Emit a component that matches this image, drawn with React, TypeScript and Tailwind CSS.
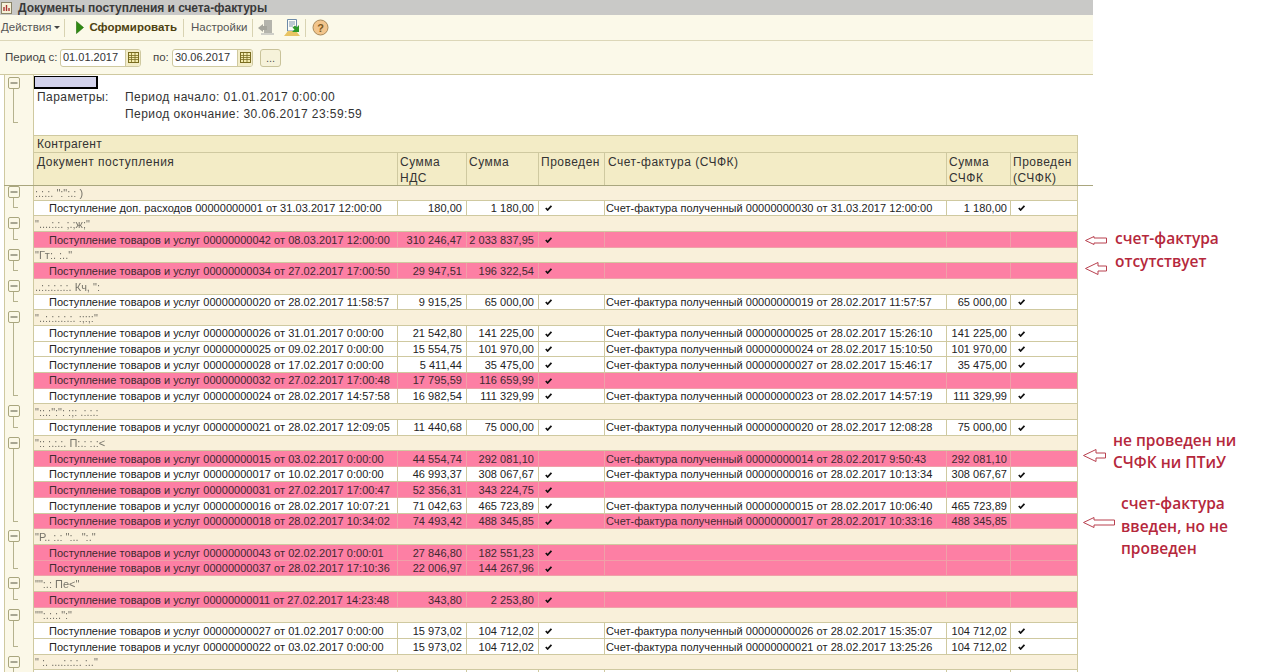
const COLS = 'grid grid-cols-[364px_69px_72px_66px_342px_64px_67px] w-[1044px] shrink-0';

type Row = {
  doc: string;
  nds: string;
  sum: string;
  posted?: boolean;
  sf?: string;
  sfSum?: string;
  sfPosted?: boolean;
  pink?: boolean;
};

type Group = { name: string; rows: Row[] };

const goods = (no: string, date: string) => `Поступление товаров и услуг 000000000${no} от ${date}`;
const invoice = (no: string, date: string) => `Счет-фактура полученный 000000000${no} от ${date}`;

const groups: Group[] = [
  { name: ':.:.:. ":":.: )', rows: [
    { doc: 'Поступление доп. расходов 00000000001 от 31.03.2017 12:00:00', nds: '180,00', sum: '1 180,00', posted: true, sf: invoice('30', '31.03.2017 12:00:00'), sfSum: '1 180,00', sfPosted: true },
  ] },
  { name: '"....:.:. ;.;ж;"', rows: [
    { doc: goods('42', '08.03.2017 12:00:00'), nds: '310 246,47', sum: '2 033 837,95', posted: true, pink: true },
  ] },
  { name: '"Гт:. :.."', rows: [
    { doc: goods('34', '27.02.2017 17:00:50'), nds: '29 947,51', sum: '196 322,54', posted: true, pink: true },
  ] },
  { name: '..:.:.:.:.:. Кч, ":', rows: [
    { doc: goods('20', '28.02.2017 11:58:57'), nds: '9 915,25', sum: '65 000,00', posted: true, sf: invoice('19', '28.02.2017 11:57:57'), sfSum: '65 000,00', sfPosted: true },
  ] },
  { name: '"..:.:.:.:.:. :;:;:"', rows: [
    { doc: goods('26', '31.01.2017 0:00:00'), nds: '21 542,80', sum: '141 225,00', posted: true, sf: invoice('25', '28.02.2017 15:26:10'), sfSum: '141 225,00', sfPosted: true },
    { doc: goods('25', '09.02.2017 0:00:00'), nds: '15 554,75', sum: '101 970,00', posted: true, sf: invoice('24', '28.02.2017 15:10:50'), sfSum: '101 970,00', sfPosted: true },
    { doc: goods('28', '17.02.2017 0:00:00'), nds: '5 411,44', sum: '35 475,00', posted: true, sf: invoice('27', '28.02.2017 15:46:17'), sfSum: '35 475,00', sfPosted: true },
    { doc: goods('32', '27.02.2017 17:00:48'), nds: '17 795,59', sum: '116 659,99', posted: true, pink: true },
    { doc: goods('24', '28.02.2017 14:57:58'), nds: '16 982,54', sum: '111 329,99', posted: true, sf: invoice('23', '28.02.2017 14:57:19'), sfSum: '111 329,99', sfPosted: true },
  ] },
  { name: '"::.:":": :;: .:.:.:', rows: [
    { doc: goods('21', '28.02.2017 12:09:05'), nds: '11 440,68', sum: '75 000,00', posted: true, sf: invoice('20', '28.02.2017 12:08:28'), sfSum: '75 000,00', sfPosted: true },
  ] },
  { name: '":: :.:.:. П:.: :.:<', rows: [
    { doc: goods('15', '03.02.2017 0:00:00'), nds: '44 554,74', sum: '292 081,10', pink: true, sf: invoice('14', '28.02.2017 9:50:43'), sfSum: '292 081,10' },
    { doc: goods('17', '10.02.2017 0:00:00'), nds: '46 993,37', sum: '308 067,67', posted: true, sf: invoice('16', '28.02.2017 10:13:34'), sfSum: '308 067,67', sfPosted: true },
    { doc: goods('31', '27.02.2017 17:00:47'), nds: '52 356,31', sum: '343 224,75', posted: true, pink: true },
    { doc: goods('16', '28.02.2017 10:07:21'), nds: '71 042,63', sum: '465 723,89', posted: true, sf: invoice('15', '28.02.2017 10:06:40'), sfSum: '465 723,89', sfPosted: true },
    { doc: goods('18', '28.02.2017 10:34:02'), nds: '74 493,42', sum: '488 345,85', posted: true, pink: true, sf: invoice('17', '28.02.2017 10:33:16'), sfSum: '488 345,85' },
  ] },
  { name: '"Р.. :.: ":.. ":."', rows: [
    { doc: goods('43', '02.02.2017 0:00:01'), nds: '27 846,80', sum: '182 551,23', posted: true, pink: true },
    { doc: goods('37', '28.02.2017 17:10:36'), nds: '22 006,97', sum: '144 267,96', posted: true, pink: true },
  ] },
  { name: '"":.: Пе<"', rows: [
    { doc: goods('11', '27.02.2017 14:23:48'), nds: '343,80', sum: '2 253,80', posted: true, pink: true },
  ] },
  { name: '"":.:.:.":"', rows: [
    { doc: goods('27', '01.02.2017 0:00:00'), nds: '15 973,02', sum: '104 712,02', posted: true, sf: invoice('26', '28.02.2017 15:35:07'), sfSum: '104 712,02', sfPosted: true },
    { doc: goods('22', '03.02.2017 0:00:00'), nds: '15 973,02', sum: '104 712,02', posted: true, sf: invoice('21', '28.02.2017 13:25:26'), sfSum: '104 712,02', sfPosted: true },
  ] },
  { name: '" :. ....:.:.:. :.."', rows: [{ doc: '', nds: '', sum: '' }] },
];

function Check() {
  return (
    <svg width="7" height="6" viewBox="0 0 7 6" className="block">
      <path d="M0.8 3 L2.6 5 L6.4 0.8" fill="none" stroke="#111" strokeWidth="1.7" />
    </svg>
  );
}

function TreeBox() {
  return (
    <svg width="12" height="12" viewBox="0 0 12 12" className="block">
      <rect x="0.5" y="0.5" width="11" height="11" rx="1.5" fill="#fbf8e6" stroke="#a9a67e" />
      <path d="M2.5 6 H9.5" stroke="#55553f" />
    </svg>
  );
}

function Calendar() {
  return (
    <div className="w-[15px] h-full bg-[#f3edc8] border-l border-[#cfc9a0] flex items-center justify-center">
      <svg width="11" height="11" viewBox="0 0 11 11">
        <rect x="0.5" y="0.5" width="10" height="10" fill="#f4ecae" stroke="#7a6d20" />
        <path d="M0.5 3.5H10.5M0.5 5.5H10.5M0.5 7.5H10.5M3.5 0.5V10.5M7 0.5V10.5" stroke="#7a6d20" strokeWidth="0.8" />
      </svg>
    </div>
  );
}

function DateInput({ value }: { value: string }) {
  return (
    <div className="flex items-center justify-between w-[81px] h-[18px] bg-white border border-[#cfc9a0] rounded-[3px] overflow-hidden">
      <span className="pl-[2px] text-[11px] text-[#333]">{value}</span>
      <Calendar />
    </div>
  );
}

function Sep({ className }: { className: string }) {
  return <div className={`w-px h-[18px] bg-[#d8d3b2] ${className}`} />;
}

function Cell({ children, pink, right, last, tight }: { children?: React.ReactNode; pink?: boolean; right?: boolean; last?: boolean; tight?: boolean }) {
  return (
    <div
      className={`h-full pt-px flex items-center overflow-hidden whitespace-nowrap ${last ? '' : 'border-r'} ${pink ? 'border-[#f0a0a8]' : 'border-[#cfc9a0]'} ${right ? 'justify-end' : ''} ${right && !tight ? 'pr-[4px]' : ''} ${tight ? 'pr-[3px]' : ''}`}
    >
      {children}
    </div>
  );
}

function Gutter({ end, children }: { end?: boolean; children?: React.ReactNode }) {
  return (
    <div className="w-[29px] h-full bg-[#fbf8e8] border-r border-[#cfc9a0] shrink-0">
      {children ?? (
        <div className={`ml-[8px] w-[5px] border-l border-[#b5b28e] ${end ? 'h-1/2 border-b' : 'h-full'}`} />
      )}
    </div>
  );
}

function DataRow({ row, end }: { row: Row; end: boolean }) {
  const bg = row.pink ? 'bg-[#fd7fa4] text-[#3f2a30] border-[#f0a0a8]' : 'bg-white text-[#222] border-[#cfc9a0]';
  return (
    <div className="flex h-[15.67px] pl-[4px]">
      <div className="w-px bg-[#cfc9a0] shrink-0" />
      <Gutter end={end} />
      <div className={`${COLS} ${bg} border-b border-r border-r-[#cfc9a0] text-[11px] tracking-[0.04px]`}>
        <Cell pink={row.pink}><span className="pl-[15px]">{row.doc}</span></Cell>
        <Cell pink={row.pink} right>{row.nds}</Cell>
        <Cell pink={row.pink} right>{row.sum}</Cell>
        <Cell pink={row.pink}><span className="pl-[6px]">{row.posted && <Check />}</span></Cell>
        <Cell pink={row.pink}><span className="pl-[1px]">{row.sf}</span></Cell>
        <Cell pink={row.pink} right tight>{row.sfSum}</Cell>
        <Cell pink={row.pink} last><span className="pl-[7px]">{row.sfPosted && <Check />}</span></Cell>
      </div>
    </div>
  );
}

function GroupRow({ name, open }: { name: string; open: boolean }) {
  return (
    <div className="flex h-[15.67px] pl-[4px]">
      <div className="w-px bg-[#cfc9a0] shrink-0" />
      <Gutter>
        <div className="h-full flex flex-col items-start pl-[3px] pt-[1px]">
          <TreeBox />
          {open && <div className="ml-[5px] flex-1 border-l border-[#b5b28e]" />}
        </div>
      </Gutter>
      <div className="w-[1044px] shrink-0 pt-px bg-[#f9f0da] border-b border-r border-[#cfc9a0] flex items-center pl-[1px] text-[11px] text-[#77746a] blur-[0.4px] whitespace-nowrap overflow-hidden">
        {name}
      </div>
    </div>
  );
}

function HeaderText({ children, wide }: { children: React.ReactNode; wide?: boolean }) {
  return (
    <div className={`border-r border-[#cfc9a0] ${wide ? 'pl-[3px]' : 'pl-[2px]'} pt-[1px] leading-[16px] tracking-[0.5px] overflow-hidden whitespace-nowrap`}>
      {children}
    </div>
  );
}

function Arrow({ w, h, className }: { w: number; h: number; className: string }) {
  const m = h / 2;
  const hw = h;
  return (
    <svg width={w} height={h} viewBox={`0 0 ${w} ${h}`} className={`absolute ${className}`}>
      <path
        d={`M0.5 ${m} L${hw} 0.5 V${m - 2.5} H${w - 0.5} V${m + 2.5} H${hw} V${h - 0.5} Z`}
        fill="white"
        stroke="#b8404f"
        strokeWidth="1"
      />
    </svg>
  );
}

function Note({ className, children }: { className: string; children: React.ReactNode }) {
  return (
    <div className={`absolute whitespace-nowrap text-[15.5px] leading-[20px] font-semibold text-[#b5283c] font-['Open_Sans',sans-serif] ${className}`}>
      {children}
    </div>
  );
}

export default function App() {
  return (
    <div className="relative w-[1264px] h-[672px] overflow-hidden bg-white font-['Liberation_Sans',Arial,sans-serif] text-[#222]">
      <div className="w-[1093px]">
        {/* Title */}
        <div className="h-[15px] bg-[#c9c9c7] flex items-center overflow-hidden">
          <svg width="12" height="13" viewBox="0 0 12 13" className="ml-[1px]">
            <rect x="0.5" y="1.5" width="10" height="11" fill="#f6f1d8" stroke="#8a8468" />
            <path d="M3 10V6M5.5 10V4M8 10V7" stroke="#a33" strokeWidth="1.4" />
          </svg>
          <span className="ml-[5px] text-[12px] font-bold text-[#3a3a3a] tracking-[-0.07px]">Документы поступления и счета-фактуры</span>
        </div>

        {/* Toolbar */}
        <div className="h-[26px] bg-[#fbf9e9] border-b border-[#dcd7b8] flex items-center text-[11.5px] text-[#555]">
          <span className="ml-[1px]">Действия</span>
          <span className="ml-[3px] w-0 h-0 border-x-[3px] border-x-transparent border-t-[3px] border-t-[#444]" />
          <Sep className="ml-[4px]" />
          <svg width="8" height="13" viewBox="0 0 8 13" className="ml-[11px]">
            <path d="M0.5 0.5 L7.5 6.5 L0.5 12.5 Z" fill="#2f8a12" stroke="#1f6a0a" strokeWidth="0.6" />
          </svg>
          <span className="ml-[5px] font-bold text-[#4e4210]">Сформировать</span>
          <Sep className="ml-[6px]" />
          <span className="ml-[7px]">Настройки</span>
          <Sep className="ml-[5px]" />
          <svg width="18" height="17" viewBox="0 0 18 17" className="ml-[5px]">
            <path d="M6 1H14V14H6Z" fill="#b4b4ac" />
            <path d="M0 9L5 5V7H9V11H5V13Z" fill="#a5a59c" />
            <path d="M3 15H16" stroke="#cfcfc8" strokeWidth="2" />
          </svg>
          <svg width="18" height="18" viewBox="0 0 18 18" className="ml-[7px]">
            <path d="M4.5 0.5H13.5V12H4.5Z" fill="#fdfdf6" stroke="#6d8aa8" />
            <path d="M6 3H12M6 5H12M6 7H10" stroke="#7d93ad" />
            <path d="M1 17L5 12H13L17 17Z" fill="#e8c464" />
            <path d="M16 6L16 13H9L11.5 10.5L9.5 8.5L12 6.5L13.8 8.3Z" fill="#2f9a2a" />
          </svg>
          <Sep className="ml-[4px]" />
          <svg width="17" height="17" viewBox="0 0 17 17" className="ml-[6px]">
            <circle cx="8.5" cy="8.5" r="7.5" fill="#f2c58c" stroke="#a98a5a" />
            <text x="8.5" y="12.5" textAnchor="middle" fontSize="11" fontWeight="700" fill="#7d5a22" fontFamily="Liberation Sans">?</text>
          </svg>
        </div>

        {/* Period */}
        <div className="h-[34px] bg-[#fbf9e9] border-b border-[#cfc9a0] flex items-center text-[11.5px] text-[#444]">
          <span className="ml-[5px] w-[55px]">Период с:</span>
          <DateInput value="01.01.2017" />
          <span className="ml-[12px] w-[19px]">по:</span>
          <DateInput value="30.06.2017" />
          <button className="ml-[7px] w-[21px] h-[18px] bg-[#f6f2da] border border-[#c9c39a] rounded-[3px] text-[11px] leading-[14px] text-[#555]">...</button>
        </div>

        {/* Params */}
        <div className="flex h-[60px] pl-[4px]">
          <div className="w-px bg-[#cfc9a0] shrink-0" />
          <div className="w-[29px] h-full bg-[#fbf8e8] border-r border-[#cfc9a0] shrink-0 flex flex-col items-start pl-[3px] pt-[2px]">
            <TreeBox />
            <div className="ml-[5px] w-[5px] h-[34px] border-l border-b border-[#b5b28e]" />
          </div>
          <div className="flex-1 text-[12px] tracking-[0.45px] text-[#333]">
            <div className="mt-[1px] w-[64px] h-[13px] bg-[#d3d3ec] border border-black border-r-2 border-b-2" />
            <div className="flex leading-[17px]">
              <span className="ml-[3px] w-[88px]">Параметры:</span>
              <div>
                <div>Период начало: 01.01.2017 0:00:00</div>
                <div>Период окончание: 30.06.2017 23:59:59</div>
              </div>
            </div>
          </div>
        </div>

        {/* Table header */}
        <div className="flex h-[50px] pl-[4px]">
          <div className="w-px bg-[#cfc9a0] shrink-0" />
          <div className="w-[29px] h-full bg-[#fbf8e8] border-r border-[#cfc9a0] shrink-0" />
          <div className="w-[1044px] shrink-0 bg-[#f3ecc6] border-t border-r border-[#cfc9a0] text-[12px] text-[#333]">
            <div className="h-[17px] border-b border-[#cfc9a0] pl-[3px] pt-[1px] leading-[15px] tracking-[0.3px]">Контрагент</div>
            <div className={`${COLS} h-[32px] -mr-px`}>
              <HeaderText wide>Документ поступления</HeaderText>
              <HeaderText>Сумма<br />НДС</HeaderText>
              <HeaderText>Сумма</HeaderText>
              <HeaderText>Проведен</HeaderText>
              <HeaderText wide>Счет-фактура (СЧФК)</HeaderText>
              <HeaderText>Сумма<br />СЧФК</HeaderText>
              <HeaderText>Проведен<br />(СЧФК)</HeaderText>
            </div>
          </div>
        </div>
        <div className="relative z-10 h-px -mb-px ml-[4px] bg-[#a9a67e]" />

        {/* Rows */}
        {groups.map((g) => (
          <div key={g.name}>
            <GroupRow name={g.name} open={g.rows.length > 0} />
            {g.rows.map((r, i) => (
              <DataRow key={r.doc} row={r} end={i === g.rows.length - 1} />
            ))}
          </div>
        ))}
      </div>

      {/* Notes on the picture */}
      <Arrow w={22} h={9} className="left-[1085px] top-[236px]" />
      <Arrow w={22} h={13} className="left-[1085px] top-[262px]" />
      <Note className="left-[1115px] top-[228px]">счет-фактура</Note>
      <Note className="left-[1115px] top-[251px]">отсутствует</Note>
      <Arrow w={23} h={13} className="left-[1083px] top-[449px]" />
      <Arrow w={32} h={11} className="left-[1083px] top-[517px]" />
      <Note className="left-[1113px] top-[430px]">не проведен ни</Note>
      <Note className="left-[1113px] top-[452px]">СЧФК ни ПТиУ</Note>
      <Note className="left-[1121px] top-[493px]">счет-фактура</Note>
      <Note className="left-[1121px] top-[516px]">введен, но не</Note>
      <Note className="left-[1121px] top-[538px]">проведен</Note>
    </div>
  );
}
